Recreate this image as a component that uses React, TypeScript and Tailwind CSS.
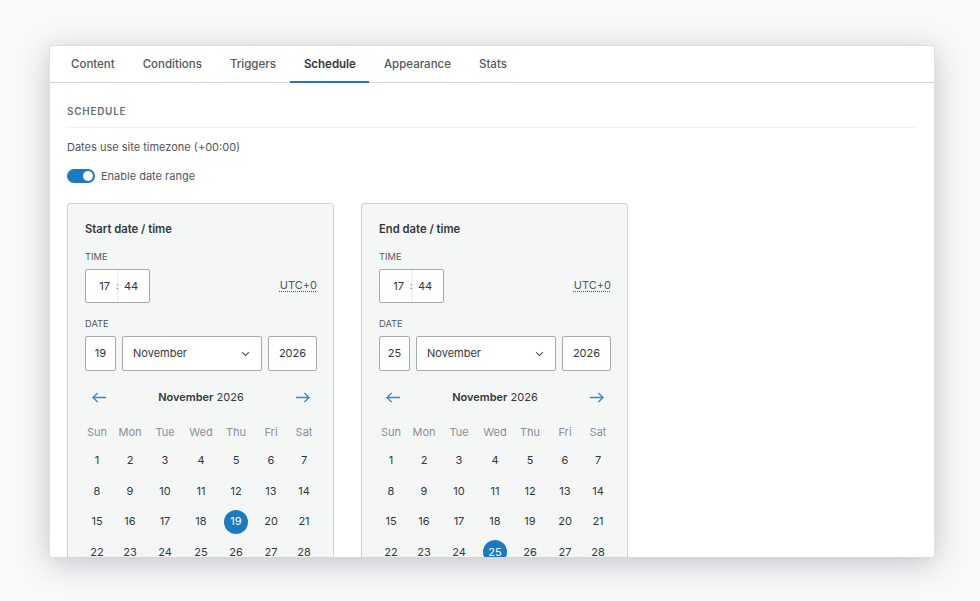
import React from "react";

const tabs = ["Content", "Conditions", "Triggers", "Schedule", "Appearance", "Stats"];
const dayNames = ["Sun", "Mon", "Tue", "Wed", "Thu", "Fri", "Sat"];
const days = Array.from({ length: 28 }, (_, i) => i + 1);

const Arrow: React.FC<{ flip?: boolean }> = ({ flip }) => (
  <svg width="14" height="11" viewBox="0 0 14 11" fill="none" stroke="#2f8ac9" strokeWidth="1.3" className={flip ? "rotate-180" : ""}>
    <path d="M14 5.5H1M5.6 1 1 5.5 5.6 10" />
  </svg>
);

const Panel: React.FC<{ title: string; day: number }> = ({ title, day }) => {
  return (
    <div className="h-[400px] w-[267px] shrink-0 rounded-[3px] border border-[#cfd1d3] bg-[#f5f7f7] pl-[17px] pr-[16px] pt-[17px]">
      <div className="text-[11.25px] leading-4 font-semibold text-[#32373c]">{title}</div>
      <div className="mt-[14px] text-[9.3px] leading-3 text-[#50575e]">TIME</div>
      <div className="mt-[5px] flex items-center justify-between">
        <div className="relative mt-[1px] flex h-[34px] w-[65px] items-center rounded-[2px] border border-[#a7aaad] bg-white text-[11px] text-[#32373c]">
          <span className="flex h-full w-[33px] items-center justify-end border-r-2 border-[#f2f3f4] pr-[7px]">17</span>
          <span className="absolute left-[30px] top-[9px] text-[9px] text-[#50575e]">:</span>
          <span className="pl-[5px]">44</span>
        </div>
        <span className="text-[11px] text-[#50575e] underline decoration-dotted underline-offset-2">UTC+0</span>
      </div>
      <div className="mt-[15px] text-[9.3px] leading-3 text-[#50575e]">DATE</div>
      <div className="mt-[6px] flex gap-[6px] text-[11px] text-[#32373c]">
        <div className="flex h-[35px] w-[31px] items-center justify-center rounded-[2px] border border-[#a7aaad] bg-white">{day}</div>
        <div className="flex h-[35px] w-[140px] items-center justify-between rounded-[2px] border border-[#a7aaad] bg-white pl-[10px] pr-[11px]">
          <span>November</span>
          <svg width="9" height="6" viewBox="0 0 9 6" fill="none" stroke="#50575e" strokeWidth="1.1">
            <path d="M1 1.2 4.5 4.5 8 1.2" />
          </svg>
        </div>
        <div className="flex h-[35px] w-[49px] items-center justify-center rounded-[2px] border border-[#a7aaad] bg-white">2026</div>
      </div>
      <div className="mt-[20px] flex h-[12px] items-center justify-between px-[7px]">
        <Arrow />
        <div className="text-[11px] text-[#32373c]">
          <span className="font-semibold">November</span> 2026
        </div>
        <Arrow flip />
      </div>
      <div className="-ml-[5px] mt-[22px] grid w-[240px] grid-cols-[34px_32px_38px_34px_36px_34px_32px] text-center text-[11px]">
        {dayNames.map((d) => (
          <div key={d} className="h-[14px] leading-[14px] text-[#8c8f94]">{d}</div>
        ))}
        <div className="col-span-7 h-[6px]" />
        {days.map((d) => (
          <div key={d} className="flex h-[30.7px] items-center justify-center text-[#32373c]">
            {d === day ? (
              <span className="flex h-[24px] w-[24px] items-center justify-center rounded-full bg-[#1e7ac0] text-white">{d}</span>
            ) : (
              d
            )}
          </div>
        ))}
      </div>
    </div>
  );
};

export default function App() {
  return (
    <div className="h-[601px] w-[980px] overflow-hidden bg-[#f9f9fa] pl-[49px] pt-[45px] font-['Inter',sans-serif]">
      <div className="h-[512px] w-[886px] overflow-hidden rounded-[3px] border border-[#dfe0e3] border-b-0 bg-white shadow-[0_6px_30px_rgba(30,35,50,0.25)]">
        <div className="flex h-[37px] gap-px border-b border-[#d5d7d9] pl-[7.5px]">
          {tabs.map((t) => (
            <div
              key={t}
              className={
                t === "Schedule"
                  ? "flex h-[37px] items-center border-b-2 border-[#1e7ac0] px-[13.5px] pt-[2px] text-[11.5px] font-semibold text-[#32373c]"
                  : "flex h-[37px] items-center px-[13.5px] text-[11.5px] font-medium text-[#50575e]"
              }
            >
              {t}
            </div>
          ))}
        </div>
        <div className="pl-[17px] pr-[17px]">
          <div className="mt-[22px] border-b border-[#f0f1f2] pb-[9px] text-[10px] leading-[13px] font-semibold tracking-[0.7px] text-[#6b7075]">SCHEDULE</div>
          <div className="mt-[11px] text-[11px] leading-[16px] text-[#50575e]">Dates use site timezone (+00:00)</div>
          <div className="mt-[13px] flex items-center gap-[6px]">
            <div className="flex h-[14px] w-[28px] items-center justify-end rounded-full bg-[#1e7ac0] pr-[2px]">
              <span className="h-[10px] w-[10px] rounded-full bg-white" />
            </div>
            <span className="text-[11px] leading-[16px] text-[#50575e]">Enable date range</span>
          </div>
          <div className="mt-[19px] flex gap-[27px]">
            <Panel title="Start date / time" day={19} />
            <Panel title="End date / time" day={25} />
          </div>
        </div>
      </div>
    </div>
  );
}
